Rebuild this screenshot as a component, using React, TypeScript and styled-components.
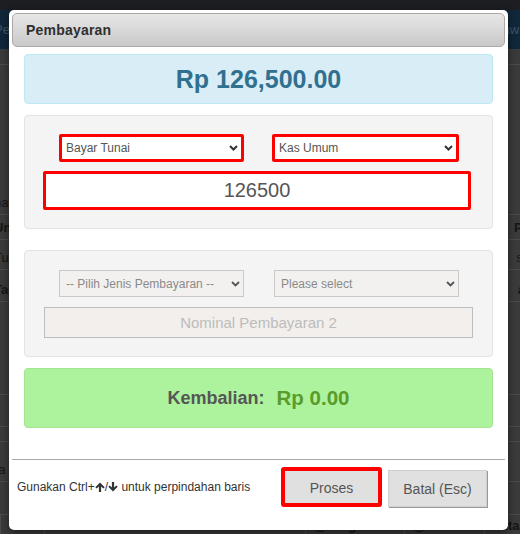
import React from "react";
import styled, { createGlobalStyle } from "styled-components";

const GlobalStyle = createGlobalStyle`
  html, body { margin: 0; padding: 0; }
  body {
    width: 520px;
    height: 534px;
    overflow: hidden;
    background: #3b3b3b;
    font-family: "Liberation Sans", Arial, sans-serif;
  }
  * { box-sizing: border-box; }
`;

/* ---------- dimmed page behind the dialog ---------- */

const Page = styled.div`
  position: relative;
  width: 520px;
  height: 534px;
  overflow: hidden;
  display: flex;
  flex-direction: column;
  background: #3b3b3b;
`;

const TopStrip = styled.div`
  height: 10px;
  background: #1d1e21;
`;

const NavBar = styled.div`
  height: 39px;
  background: #11273a;
  display: flex;
  align-items: center;
  justify-content: space-between;
  padding: 0 0 0 0;
  color: #3e5566;
  font-size: 13px;
`;

const BgRow = styled.div<{ $h: number; $bold?: boolean }>`
  height: ${(p) => p.$h}px;
  flex: none;
  border-bottom: 1px solid #4c4c4c;
  display: flex;
  align-items: flex-end;
  justify-content: space-between;
  padding-bottom: 4px;
  color: #151515;
  font-size: 13px;
  font-weight: ${(p) => (p.$bold ? 700 : 400)};
  white-space: nowrap;
`;

const BgLeft = styled.span`
  margin-left: -6px;
`;

const BgRight = styled.span`
  margin-right: -10px;
`;

const BgTableHead = styled.div`
  flex: 1;
  display: grid;
  grid-template-columns: 44px 261px 99px 80px 36px;
  color: #141414;
  font-size: 13px;
  font-weight: 700;
`;

const BgCell = styled.div`
  border-left: 1px solid #4c4c4c;
  padding: 3px 0 0 8px;
  white-space: nowrap;
  overflow: hidden;
`;

/* ---------- dialog ---------- */

const Modal = styled.div`
  position: absolute;
  left: 9px;
  top: 10px;
  width: 499px;
  height: 520px;
  padding: 3px;
  background: #ffffff;
  border-radius: 5px;
  box-shadow: 0 3px 9px rgba(0, 0, 0, 0.5);
  display: flex;
  flex-direction: column;
`;

const Header = styled.div`
  height: 34px;
  flex: none;
  display: flex;
  align-items: center;
  padding-left: 13px;
  background: linear-gradient(#e7e7e7, #c9c9c9);
  border: 1px solid #a9a9a9;
  border-radius: 5px;
  color: #2f2f2f;
  font-size: 14px;
  font-weight: 700;
  letter-spacing: 0.2px;
`;

const Body = styled.div`
  padding: 7px 12px 0;
  display: flex;
  flex-direction: column;
`;

const TotalBox = styled.div`
  height: 50px;
  display: flex;
  align-items: center;
  justify-content: center;
  background: #d9edf7;
  border: 1px solid #bce8f1;
  border-radius: 4px;
  color: #31708f;
  font-size: 25px;
  font-weight: 700;
`;

const Well = styled.div<{ $mt: number; $h: number; $pt: number }>`
  margin-top: ${(p) => p.$mt}px;
  height: ${(p) => p.$h}px;
  padding-top: ${(p) => p.$pt}px;
  background: #f4f4f4;
  border: 1px solid #e3e3e3;
  border-radius: 4px;
  display: flex;
  flex-direction: column;
`;

const SelectRow = styled.div`
  display: grid;
  grid-template-columns: 185px 187px;
  column-gap: 28px;
  padding-left: 34px;
`;

const SelectBox = styled.div<{ $invalid?: boolean; $h: number; $w?: number }>`
  height: ${(p) => p.$h}px;
  width: ${(p) => (p.$w ? `${p.$w}px` : "auto")};
  display: flex;
  align-items: center;
  justify-content: space-between;
  padding: 0 3px 0 ${(p) => (p.$invalid ? 4 : 6)}px;
  background: ${(p) => (p.$invalid ? "#ffffff" : "#f3f1ef")};
  border: ${(p) => (p.$invalid ? "3px solid #ff0000" : "1px solid #c9c9c9")};
  border-radius: ${(p) => (p.$invalid ? 2 : 0)}px;
  color: ${(p) => (p.$invalid ? "#555555" : "#8a8a8a")};
  font-size: 12px;
  white-space: nowrap;
`;

const AmountInput = styled.div<{ $invalid?: boolean; $h: number; $ml: number; $w: number; $mt: number }>`
  margin-top: ${(p) => p.$mt}px;
  margin-left: ${(p) => p.$ml}px;
  width: ${(p) => p.$w}px;
  height: ${(p) => p.$h}px;
  display: flex;
  align-items: center;
  justify-content: center;
  background: ${(p) => (p.$invalid ? "#ffffff" : "#f2efec")};
  border: ${(p) => (p.$invalid ? "3px solid #ff0000" : "1px solid #bdbdbd")};
  border-radius: ${(p) => (p.$invalid ? 2 : 0)}px;
  color: ${(p) => (p.$invalid ? "#555555" : "#bcbcbc")};
  font-size: ${(p) => (p.$invalid ? 20 : 15)}px;
`;

const ChangeBox = styled.div`
  margin-top: 11px;
  height: 60px;
  display: flex;
  align-items: center;
  justify-content: center;
  gap: 12px;
  background: #adf29c;
  border: 1px solid #a2e490;
  border-radius: 4px;
  font-weight: 700;
`;

const ChangeLabel = styled.span`
  color: #565656;
  font-size: 18px;
`;

const ChangeValue = styled.span`
  color: #5a9c2b;
  font-size: 20.5px;
`;

const Separator = styled.hr`
  margin: 31px 0 0;
  border: none;
  border-top: 1px solid #a9a9a9;
  height: 0;
`;

const Footer = styled.div`
  display: flex;
  align-items: center;
  padding: 7px 18px 0 5px;
`;

const Hint = styled.div`
  flex: 1;
  display: flex;
  align-items: center;
  color: #333333;
  font-size: 12px;
  white-space: pre;
`;

const ArrowIcon = styled.svg`
  width: 10px;
  height: 10px;
  fill: #333333;
`;

const Button = styled.button<{ $focused?: boolean }>`
  height: ${(p) => (p.$focused ? 40 : 37)}px;
  width: ${(p) => (p.$focused ? 101 : 99)}px;
  margin-top: ${(p) => (p.$focused ? 0 : 3)}px;
  margin-left: ${(p) => (p.$focused ? 0 : 6)}px;
  align-self: flex-start;
  background: #e0e0e0;
  border: ${(p) => (p.$focused ? "4px solid #ff0000" : "1px solid #cfcfcf")};
  border-radius: ${(p) => (p.$focused ? 3 : 0)}px;
  box-shadow: ${(p) => (p.$focused ? "none" : "1px 1px 0 #9a9a9a")};
  color: #555555;
  font-family: "Liberation Sans", Arial, sans-serif;
  font-size: 14px;
  padding: 0;
  padding-top: ${(p) => (p.$focused ? 1 : 0)}px;
`;

const Chevron = () => (
  <svg width="9" height="6" viewBox="0 0 9 6">
    <path d="M1 1 L4.5 4.5 L8 1" fill="none" stroke="#333" strokeWidth="2" />
  </svg>
);

const ChevronLight = () => (
  <svg width="9" height="6" viewBox="0 0 9 6">
    <path d="M1 1 L4.5 4.5 L8 1" fill="none" stroke="#555" strokeWidth="1.8" />
  </svg>
);

const UpArrow = () => (
  <ArrowIcon viewBox="0 0 10 10">
    <path d="M5 0.5 L9.7 5.2 L8.3 6.6 L6.1 4.4 L6.1 10 L3.9 10 L3.9 4.4 L1.7 6.6 L0.3 5.2 Z" />
  </ArrowIcon>
);

const DownArrow = () => (
  <ArrowIcon viewBox="0 0 10 10">
    <path d="M5 9.5 L9.7 4.8 L8.3 3.4 L6.1 5.6 L6.1 0 L3.9 0 L3.9 5.6 L1.7 3.4 L0.3 4.8 Z" />
  </ArrowIcon>
);

export default function App() {
  return (
    <>
      <GlobalStyle />
      <Page>
        <TopStrip />
        <NavBar>
          <BgLeft>Pembayaran</BgLeft>
          <BgRight>Rawat</BgRight>
        </NavBar>
        <BgRow $h={16} />
        <BgRow $h={150}>
          <BgLeft>nama</BgLeft>
          <BgRight />
        </BgRow>
        <BgRow $h={25} $bold>
          <BgLeft>Uni</BgLeft>
          <BgRight>Pe</BgRight>
        </BgRow>
        <BgRow $h={30}>
          <BgLeft>Tunai</BgLeft>
          <BgRight>se</BgRight>
        </BgRow>
        <BgRow $h={32} $bold>
          <BgLeft>Tanggal</BgLeft>
          <BgRight>ar</BgRight>
        </BgRow>
        <BgRow $h={93}>
          <BgLeft />
          <BgRight />
        </BgRow>
        <BgRow $h={32} />
        <BgRow $h={15} />
        <BgRow $h={40}>
          <BgLeft>ra</BgLeft>
        </BgRow>
        <BgRow $h={33} />
        <BgTableHead>
          <BgCell />
          <BgCell>SN</BgCell>
          <BgCell>@Harga</BgCell>
          <BgCell>@Diskon</BgCell>
          <BgCell>Total</BgCell>
        </BgTableHead>

        <Modal>
          <Header>Pembayaran</Header>
          <Body>
            <TotalBox>Rp 126,500.00</TotalBox>

            <Well $mt={11} $h={114} $pt={18}>
              <SelectRow>
                <SelectBox $invalid $h={28}>
                  <span>Bayar Tunai</span>
                  <Chevron />
                </SelectBox>
                <SelectBox $invalid $h={28}>
                  <span>Kas Umum</span>
                  <Chevron />
                </SelectBox>
              </SelectRow>
              <AmountInput $invalid $mt={9} $ml={18} $w={428} $h={39}>
                126500
              </AmountInput>
            </Well>

            <Well $mt={21} $h={107} $pt={19}>
              <SelectRow>
                <SelectBox $h={27}>
                  <span>-- Pilih Jenis Pembayaran --</span>
                  <ChevronLight />
                </SelectBox>
                <SelectBox $h={27} $w={185} style={{ marginLeft: 2 }}>
                  <span>Please select</span>
                  <ChevronLight />
                </SelectBox>
              </SelectRow>
              <AmountInput $mt={10} $ml={19} $w={429} $h={31}>
                Nominal Pembayaran 2
              </AmountInput>
            </Well>

            <ChangeBox>
              <ChangeLabel>Kembalian:</ChangeLabel>
              <ChangeValue>Rp 0.00</ChangeValue>
            </ChangeBox>
          </Body>

          <Separator />

          <Footer>
            <Hint>
              Gunakan Ctrl+
              <UpArrow />/<DownArrow /> untuk perpindahan baris
            </Hint>
            <Button $focused>Proses</Button>
            <Button>Batal (Esc)</Button>
          </Footer>
        </Modal>
      </Page>
    </>
  );
}
